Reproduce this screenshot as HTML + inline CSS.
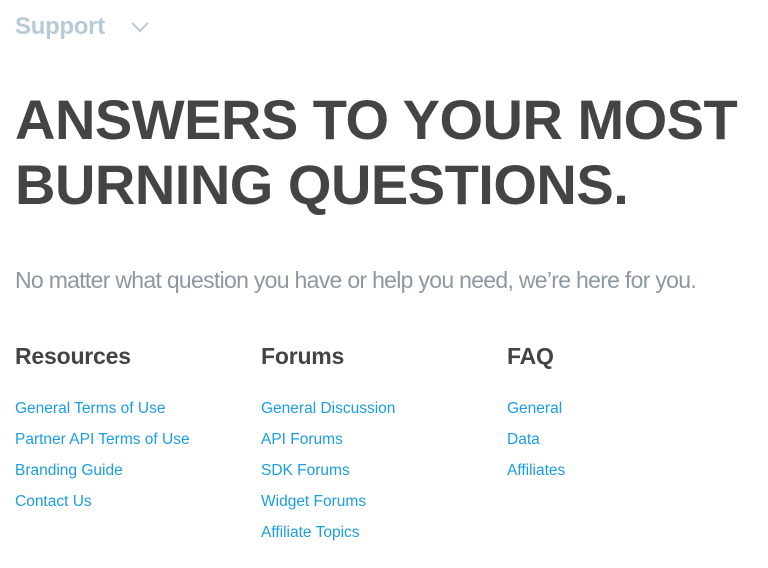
<!DOCTYPE html>
<html><head><style>
body{margin:0;background:#fff;font-family:"Liberation Sans",sans-serif;width:768px;height:568px;overflow:hidden;position:relative}
.sup{position:absolute;left:15px;top:13px;font-size:24px;font-weight:bold;color:#b8cad6;letter-spacing:-0.3px}
.chev{position:absolute;left:131px;top:21px}
h1{position:absolute;left:15px;top:87px;margin:0;font-size:56px;line-height:65px;font-weight:bold;color:#444;letter-spacing:-0.5px;white-space:nowrap}
.sub{position:absolute;left:15px;top:267px;font-size:23px;font-weight:300;color:#8d98a2;letter-spacing:-0.7px;white-space:nowrap}
.col{position:absolute;top:341px}
.col h2{margin:0;font-size:23px;font-weight:bold;color:#444;line-height:30px;letter-spacing:-0.2px}
.col a{display:block;color:#1a9ee0;font-size:15.5px;line-height:31px;text-decoration:none}
.col .l{margin-top:22px}
</style></head><body>
<div class="sup">Support</div>
<svg class="chev" width="18" height="12" viewBox="0 0 18 12"><path d="M1 2 L9 10 L17 2" fill="none" stroke="#b8cad6" stroke-width="2"/></svg>
<h1>ANSWERS TO YOUR MOST<br>BURNING QUESTIONS.</h1>
<div class="sub">No matter what question you have or help you need, we’re here for you.</div>
<div class="col" style="left:15px"><h2>Resources</h2><div class="l"><a>General Terms of Use</a><a>Partner API Terms of Use</a><a>Branding Guide</a><a>Contact Us</a></div></div>
<div class="col" style="left:261px"><h2>Forums</h2><div class="l"><a>General Discussion</a><a>API Forums</a><a>SDK Forums</a><a>Widget Forums</a><a>Affiliate Topics</a></div></div>
<div class="col" style="left:507px"><h2>FAQ</h2><div class="l"><a>General</a><a>Data</a><a>Affiliates</a></div></div>
</body></html>
